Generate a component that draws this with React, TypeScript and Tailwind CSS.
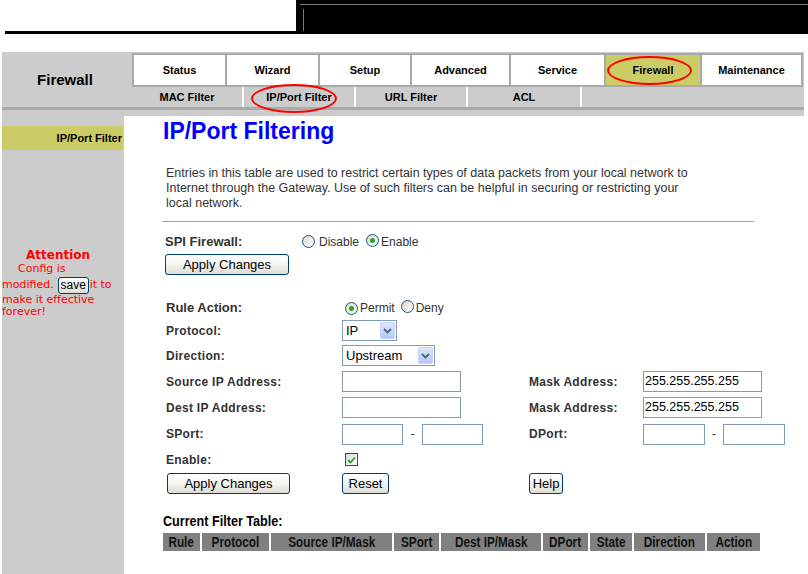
import React from "react";

const Radio = ({ checked }: { checked?: boolean }) => (
  <span className="relative inline-block w-[13px] h-[13px] rounded-full border border-[#1c5180] bg-linear-to-br from-[#d6d6d0] to-white shrink-0">
    {checked && (
      <span className="absolute left-[3px] top-[3px] w-[5px] h-[5px] rounded-full bg-[#2aa52a]" />
    )}
  </span>
);

const XPButton = ({ w, children }: { w: string; children: React.ReactNode }) => (
  <button
    className={`${w} h-[21px] border border-[#003c74] rounded-[3px] bg-linear-to-b from-white via-[#f5f5f1] to-[#dedcd2] text-[13px] leading-none text-black flex items-center justify-center shrink-0`}
  >
    {children}
  </button>
);

const Chevron = () => (
  <svg width="9" height="6" viewBox="0 0 9 6">
    <path d="M1 1 L4.5 4.5 L8 1" fill="none" stroke="#4d6185" strokeWidth="1.8" />
  </svg>
);

const XPSelect = ({ w, value }: { w: string; value: string }) => (
  <div className={`relative ${w} h-[21px] border border-[#7f9db9] bg-white text-[13px] text-black pl-[3px] flex items-center`}>
    {value}
    <span className="absolute right-[1px] top-[1px] bottom-[1px] w-[15px] rounded-[2px] border border-[#c3d3fd] bg-linear-to-b from-[#dde6fd] to-[#b6c9f5] flex items-center justify-center">
      <Chevron />
    </span>
  </div>
);

const Input = ({ w, value }: { w: string; value?: string }) => (
  <div className={`${w} h-[21px] border border-[#7f9db9] bg-white text-[12.5px] text-black pl-[1px] flex items-center`}>
    {value}
  </div>
);

const Label = ({ children }: { children: React.ReactNode }) => (
  <span className="text-[12px] font-bold tracking-[0.3px] text-[#333]">{children}</span>
);

const tabs = [
  { t: "Status", w: "w-[91px]" },
  { t: "Wizard", w: "w-[91px]" },
  { t: "Setup", w: "w-[90px]" },
  { t: "Advanced", w: "w-[97px]" },
  { t: "Service", w: "w-[93px]" },
  { t: "Firewall", w: "w-[94px]", active: true },
  { t: "Maintenance", w: "flex-1" },
];

const subs = [
  { t: "MAC Filter", w: "w-[110px]" },
  { t: "IP/Port Filter", w: "w-[110px]" },
  { t: "URL Filter", w: "w-[110px]" },
  { t: "ACL", w: "w-[112px]" },
];

const cols = [
  { t: "Rule", w: "w-[37px]" },
  { t: "Protocol", w: "w-[67px]" },
  { t: "Source IP/Mask", w: "w-[121px]" },
  { t: "SPort", w: "w-[45px]" },
  { t: "Dest IP/Mask", w: "w-[100px]" },
  { t: "DPort", w: "w-[45px]" },
  { t: "State", w: "w-[42px]" },
  { t: "Direction", w: "w-[71px]" },
  { t: "Action", w: "w-[53px]" },
];

export default function App() {
  return (
    <div className="relative w-[808px] h-[574px] overflow-hidden bg-white font-['Liberation_Sans',Arial,sans-serif]">
      {/* header */}
      <div className="flex h-[34px]">
        <div className="w-[296px] pl-[5px] flex flex-col justify-end">
          <div className="h-[3px] bg-black" />
        </div>
        <div className="flex-1 bg-black pt-[4px] pl-[4px]">
          <div className="h-px bg-[#7a7a7a]" />
          <div className="ml-[3px] mt-[4px] w-px h-[22px] bg-[#7a7a7a]" />
        </div>
      </div>
      <div className="h-[18px]" />

      {/* nav band */}
      <div className="ml-[2px] w-[802px] bg-[#cccccc]">
        <div className="flex h-[55px]">
          <div className="w-[126px] flex items-center justify-center text-[15px] font-bold text-black pt-[2px]">
            Firewall
          </div>
          <div className="w-[4px]" />
          <div className="w-[671px] pt-px flex flex-col">
            <div className="h-[34px] flex gap-[2px] p-[2px] bg-[#aaaaaa]">
              {tabs.map((tb) => (
                <div
                  key={tb.t}
                  className={`${tb.w} h-[30px] flex items-center justify-center text-[11px] font-bold text-black ${
                    tb.active ? "bg-[#cccc66]" : "bg-white"
                  }`}
                >
                  {tb.t}
                </div>
              ))}
            </div>
            <div className="h-[20px] flex">
              {subs.map((s) => (
                <React.Fragment key={s.t}>
                  <div className={`${s.w} flex items-center justify-center text-[11px] font-bold text-black`}>{s.t}</div>
                  <div className="w-[2px] bg-white" />
                </React.Fragment>
              ))}
            </div>
          </div>
        </div>
        <div className="h-[3px] bg-[#aaaaaa]" />
        <div className="h-[6px]" />
      </div>

      {/* body */}
      <div className="flex h-[458px]">
        <div className="ml-[2px] w-[122px] bg-[#cccccc] pt-[10px]">
          <div className="w-[121px] h-[24px] bg-[#cccc66] flex items-center justify-end pr-[1px] text-[11px] font-bold text-black">
            IP/Port Filter
          </div>
          <div className="mt-[98px] text-[#ff0000] font-['DejaVu_Sans',Verdana,sans-serif]">
            <div className="pl-[24px] text-[12px] font-bold leading-[14px]">Attention</div>
            <div className="pl-[16px] text-[11px] leading-[12px] mt-[1px]">Config is</div>
            <div className="flex items-center text-[11px] h-[18px] mt-[1px] whitespace-nowrap">
              <span>modified.</span>
              <span className="ml-[4px] mr-px w-[31px] h-[17px] border border-[#003c74] rounded-[3px] bg-linear-to-b from-white to-[#e0ded4] text-black text-[12px] font-['Liberation_Sans',Arial,sans-serif] flex items-center justify-center">
                save
              </span>
              <span>it to</span>
            </div>
            <div className="text-[11px] leading-[12px]">make it effective</div>
            <div className="text-[11px] leading-[12px]">forever!</div>
          </div>
        </div>

        <div className="flex-1 bg-white pl-[39px]">
          <div className="mt-[4px] text-[23px] leading-[23px] font-bold text-[#0000ff]">IP/Port Filtering</div>
          <div className="mt-[23px] ml-[3px] text-[12.5px] leading-[15px] text-[#333] whitespace-nowrap">
            Entries in this table are used to restrict certain types of data packets from your local network to
            <br />
            Internet through the Gateway. Use of such filters can be helpful in securing or restricting your
            <br />
            local network.
          </div>
          <div className="mt-[10px] -ml-[1px] w-[592px] h-px bg-[#aca899]" />

          {/* SPI */}
          <div className="mt-[9px] ml-[2px] h-[21px] flex items-center">
            <span className="w-[137px] text-[13px] font-bold text-[#333]">SPI Firewall:</span>
            <Radio />
            <span className="ml-[4px] text-[12px] text-[#333]">Disable</span>
            <span className="ml-[7px]"><Radio checked /></span>
            <span className="ml-[2px] text-[12px] text-[#333]">Enable</span>
          </div>
          <div className="mt-[2px] ml-[2px]">
            <XPButton w="w-[124px]">Apply Changes</XPButton>
          </div>

          {/* form grid */}
          <div className="mt-[22px] ml-[3px] grid grid-cols-[176px_187px_114px_auto]">
            <div className="h-[22px] flex items-center">
              <span className="text-[13px] font-bold text-[#333]">Rule Action:</span>
            </div>
            <div className="h-[22px] flex items-center col-span-3 pl-[3px]">
              <Radio checked />
              <span className="ml-[2px] text-[12px] text-[#333]">Permit</span>
              <span className="ml-[6px]"><Radio /></span>
              <span className="ml-[2px] text-[12px] text-[#333]">Deny</span>
            </div>

            <div className="h-[23px] flex items-center"><Label>Protocol:</Label></div>
            <div className="h-[23px] flex items-center col-span-3"><XPSelect w="w-[55px]" value="IP" /></div>

            <div className="h-[27px] flex items-center"><Label>Direction:</Label></div>
            <div className="h-[27px] flex items-center col-span-3"><XPSelect w="w-[93px]" value="Upstream" /></div>

            <div className="h-[25px] flex items-center"><Label>Source IP Address:</Label></div>
            <div className="h-[25px] flex items-center"><Input w="w-[119px]" /></div>
            <div className="h-[25px] flex items-center"><Label>Mask Address:</Label></div>
            <div className="h-[25px] flex items-center"><Input w="w-[119px]" value="255.255.255.255" /></div>

            <div className="h-[27px] flex items-center"><Label>Dest IP Address:</Label></div>
            <div className="h-[27px] flex items-center"><Input w="w-[119px]" /></div>
            <div className="h-[27px] flex items-center"><Label>Mask Address:</Label></div>
            <div className="h-[27px] flex items-center"><Input w="w-[119px]" value="255.255.255.255" /></div>

            <div className="h-[26px] flex items-center"><Label>SPort:</Label></div>
            <div className="h-[26px] flex items-center">
              <Input w="w-[61px]" />
              <span className="w-[19px] text-center text-[12px] text-[#333]">-</span>
              <Input w="w-[61px]" />
            </div>
            <div className="h-[26px] flex items-center"><Label>DPort:</Label></div>
            <div className="h-[26px] flex items-center">
              <Input w="w-[62px]" />
              <span className="w-[18px] text-center text-[12px] text-[#333]">-</span>
              <Input w="w-[62px]" />
            </div>

            <div className="h-[25px] flex items-center"><Label>Enable:</Label></div>
            <div className="h-[25px] flex items-center col-span-3 pl-[3px]">
              <span className="w-[13px] h-[13px] border border-[#1c5180] bg-linear-to-br from-[#dcdcd6] to-white flex items-center justify-center">
                <svg width="9" height="8" viewBox="0 0 9 8">
                  <path d="M1 4 L3.5 6.5 L8 1.5" fill="none" stroke="#21a121" strokeWidth="1.8" />
                </svg>
              </span>
            </div>

            <div className="h-[23px] flex items-center pl-[1px]"><XPButton w="w-[123px]">Apply Changes</XPButton></div>
            <div className="h-[23px] flex items-center"><XPButton w="w-[47px]">Reset</XPButton></div>
            <div className="h-[23px] flex items-center"><XPButton w="w-[34px]">Help</XPButton></div>
            <div className="h-[23px]" />
          </div>

          {/* table */}
          <div className="mt-[18px] text-[14px] leading-[16px] font-bold text-black">
            <span className="inline-block scale-x-[0.9] origin-left whitespace-nowrap">Current Filter Table:</span>
          </div>
          <div className="mt-[3px] -ml-[1px] flex gap-[2px] p-px">
            {cols.map((c) => (
              <div
                key={c.t}
                className={`${c.w} h-[18px] bg-[#808080] flex items-center justify-center text-[14px] font-bold text-[#111] whitespace-nowrap`}
              >
                <span className="inline-block scale-x-[0.84]">{c.t}</span>
              </div>
            ))}
          </div>
        </div>
      </div>

      {/* red annotation ellipses */}
      <div className="absolute left-[607px] top-[56px] w-[85px] h-[29px] rounded-[50%] border-2 border-[#ff0000]" />
      <div className="absolute left-[251px] top-[84px] w-[86px] h-[29px] rounded-[50%] border-2 border-[#ff0000]" />
    </div>
  );
}
